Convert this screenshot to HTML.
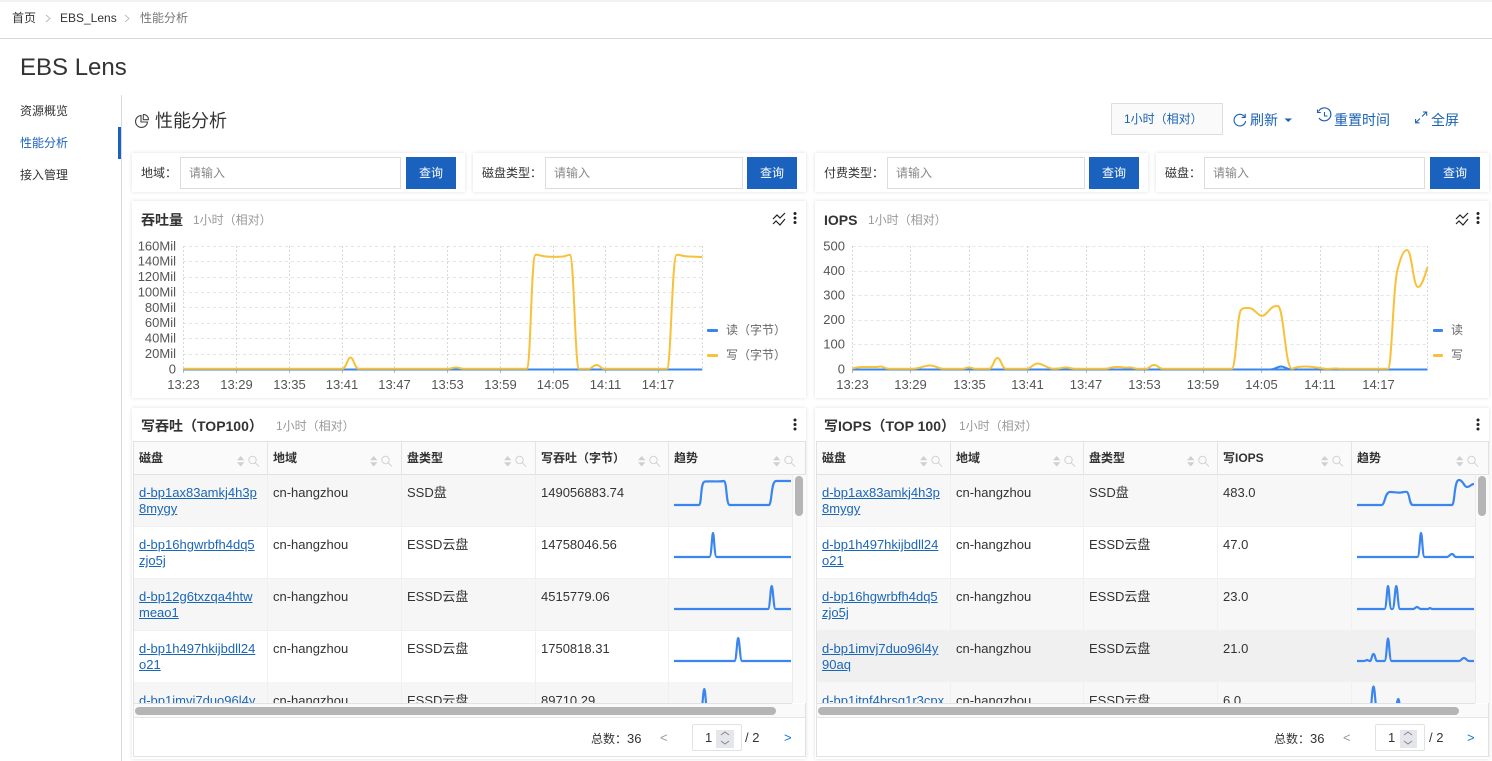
<!DOCTYPE html>
<html lang="zh"><head><meta charset="utf-8"><title>EBS Lens</title>
<style>
html,body{margin:0;padding:0;width:1492px;height:761px;overflow:hidden;background:#fff}
body{position:relative;font-family:"Liberation Sans","Noto Sans CJK SC",sans-serif;font-size:12px;color:#333}
.a,.c,.i,.b,.h,.t,.l,.r{position:absolute}
.c{background:#fff;box-shadow:0 0 4px rgba(0,0,0,.13)}
.f{white-space:nowrap;line-height:16px}
.lb{top:165px;color:#333}
.i{top:157px;height:30px;border:1px solid #dcdcdc;background:#fff;color:#888;line-height:30px;padding-left:8px;box-sizing:content-box}
.b{top:157px;width:50px;height:32px;background:#1a62bd;color:#fff;text-align:center;line-height:32px}
.h{top:450px;font-weight:700;line-height:16px;white-space:nowrap;color:#333}
.t{line-height:16px;font-size:13px;white-space:nowrap;color:#333}
.l{line-height:16px;font-size:13px;white-space:nowrap;color:#1a66b8;text-decoration:underline}
.r{height:52px;background:#fff;border-bottom:1px solid #f0f0f0;box-sizing:border-box}
.v{position:absolute;top:475px;width:1px;height:228px;background:#f0f0f0}
.vh{position:absolute;top:441px;width:1px;height:34px;background:#e4e4e4}
.ti{font-size:14px;font-weight:700;color:#333;white-space:nowrap;line-height:20px}
.su{color:#999;white-space:nowrap;line-height:16px}
svg{position:absolute;left:0;top:0}
svg text{font-family:"Liberation Sans","Noto Sans CJK SC",sans-serif;font-size:13px;fill:#555}
</style></head><body>

<div class="a" style="left:0;top:0;width:1492px;height:2px;background:#f2f2f2"></div>
<div class="a" style="left:0;top:38px;width:1492px;height:1px;background:#d9d9d9"></div>
<div class="a f" style="left:12px;top:10px">首页</div>
<div class="a f" style="left:60px;top:10px">EBS_Lens</div>
<div class="a f" style="left:140px;top:10px;color:#777">性能分析</div>
<div class="a" style="left:20px;top:53px;font-size:24px;line-height:30px;color:#333;white-space:nowrap">EBS Lens</div>

<div class="a" style="left:121px;top:95px;width:1px;height:666px;background:#d9d9d9"></div>
<div class="a" style="left:118px;top:127px;width:3px;height:32px;background:#1a62bd"></div>
<div class="a f" style="left:20px;top:103px">资源概览</div>
<div class="a f" style="left:20px;top:135px;color:#1a62bd">性能分析</div>
<div class="a f" style="left:20px;top:167px">接入管理</div>

<div class="a" style="left:155px;top:109px;font-size:18px;line-height:25px;white-space:nowrap;color:#333">性能分析</div>
<div class="a" style="left:1111px;top:103px;width:110px;height:30px;border:1px solid #ddd;background:#fafafa;border-radius:1px"></div>
<div class="a f" style="left:1124px;top:111px;color:#1a62b0">1小时（相对）</div>
<div class="a" style="left:1250px;top:110px;font-size:14px;line-height:20px;color:#1a62b0;white-space:nowrap">刷新</div>
<div class="a" style="left:1334px;top:110px;font-size:14px;line-height:20px;color:#1a62b0;white-space:nowrap">重置时间</div>
<div class="a" style="left:1431px;top:110px;font-size:14px;line-height:20px;color:#1a62b0;white-space:nowrap">全屏</div>

<!-- filters -->
<div class="c" style="left:132px;top:153px;width:333px;height:39px"></div>
<div class="c" style="left:473px;top:153px;width:333px;height:39px"></div>
<div class="c" style="left:815px;top:153px;width:333px;height:39px"></div>
<div class="c" style="left:1156px;top:153px;width:333px;height:39px"></div>
<div class="a f lb" style="left:141px">地域：</div>
<div class="i" style="left:180px;width:211px">请输入</div><div class="b" style="left:406px">查询</div>
<div class="a f lb" style="left:482px">磁盘类型：</div>
<div class="i" style="left:545px;width:188px">请输入</div><div class="b" style="left:747px">查询</div>
<div class="a f lb" style="left:824px">付费类型：</div>
<div class="i" style="left:887px;width:188px">请输入</div><div class="b" style="left:1089px">查询</div>
<div class="a f lb" style="left:1165px">磁盘：</div>
<div class="i" style="left:1204px;width:211px">请输入</div><div class="b" style="left:1430px">查询</div>

<!-- chart cards -->
<div class="c" style="left:132px;top:201px;width:674px;height:197px"></div>
<div class="c" style="left:815px;top:201px;width:674px;height:197px"></div>
<div class="a ti" style="left:141px;top:210px">吞吐量</div>
<div class="a su" style="left:193px;top:212px">1小时（相对）</div>
<div class="a ti" style="left:824px;top:210px">IOPS</div>
<div class="a su" style="left:868px;top:212px">1小时（相对）</div>
<div class="a f" style="left:726px;top:322px;color:#666">读（字节）</div>
<div class="a f" style="left:726px;top:347px;color:#666">写（字节）</div>
<div class="a f" style="left:1451px;top:322px;color:#666">读</div>
<div class="a f" style="left:1451px;top:347px;color:#666">写</div>

<!-- table cards -->
<div class="c" style="left:132px;top:408px;width:674px;height:351px"></div>
<div class="c" style="left:815px;top:408px;width:674px;height:351px"></div>
<div class="a ti" style="left:141px;top:416px">写吞吐（TOP100）</div>
<div class="a su" style="left:276px;top:418px">1小时（相对）</div>
<div class="a ti" style="left:824px;top:416px">写IOPS（TOP 100）</div>
<div class="a su" style="left:959px;top:418px">1小时（相对）</div>

<!-- left table -->
<div class="a" style="left:133px;top:441px;width:673px;height:316px;border:1px solid #e2e2e2;box-sizing:border-box"></div>
<div class="a" style="left:134px;top:442px;width:671px;height:32px;background:#fafafa;border-bottom:1px solid #e2e2e2"></div>
<div class="a" style="left:134px;top:475px;width:658px;height:228px;overflow:hidden;border-bottom:1px solid #e2e2e2">
 <div class="r" style="left:0;top:0;width:658px;background:#f6f6f6"></div>
 <div class="r" style="left:0;top:52px;width:658px;background:#fff"></div>
 <div class="r" style="left:0;top:104px;width:658px;background:#f6f6f6"></div>
 <div class="r" style="left:0;top:156px;width:658px;background:#fff"></div>
 <div class="r" style="left:0;top:207px;width:658px;background:#f6f6f6"></div>
 <a class="l" style="left:5px;top:10px">d-bp1ax83amkj4h3p<br>8mygy</a>
 <div class="t" style="left:139px;top:10px">cn-hangzhou</div><div class="t" style="left:273px;top:10px">SSD盘</div><div class="t" style="left:407px;top:10px">149056883.74</div>
 <a class="l" style="left:5px;top:62px">d-bp16hgwrbfh4dq5<br>zjo5j</a>
 <div class="t" style="left:139px;top:62px">cn-hangzhou</div><div class="t" style="left:273px;top:62px">ESSD云盘</div><div class="t" style="left:407px;top:62px">14758046.56</div>
 <a class="l" style="left:5px;top:114px">d-bp12g6txzqa4htw<br>meao1</a>
 <div class="t" style="left:139px;top:114px">cn-hangzhou</div><div class="t" style="left:273px;top:114px">ESSD云盘</div><div class="t" style="left:407px;top:114px">4515779.06</div>
 <a class="l" style="left:5px;top:166px">d-bp1h497hkijbdll24<br>o21</a>
 <div class="t" style="left:139px;top:166px">cn-hangzhou</div><div class="t" style="left:273px;top:166px">ESSD云盘</div><div class="t" style="left:407px;top:166px">1750818.31</div>
 <a class="l" style="left:5px;top:218px">d-bp1imvj7duo96l4y</a>
 <div class="t" style="left:139px;top:218px">cn-hangzhou</div><div class="t" style="left:273px;top:218px">ESSD云盘</div><div class="t" style="left:407px;top:218px">89710.29</div>
</div>
<div class="v" style="left:267px"></div><div class="v" style="left:401px"></div><div class="v" style="left:535px"></div><div class="v" style="left:668px"></div>
<div class="vh" style="left:267px"></div><div class="vh" style="left:401px"></div><div class="vh" style="left:535px"></div><div class="vh" style="left:668px"></div>
<div class="a" style="left:792px;top:475px;width:13px;height:228px;background:#fafafa;border-left:1px solid #ececec"></div>
<div class="a" style="left:134px;top:704px;width:671px;height:13px;background:#fafafa;border-bottom:1px solid #e6e6e6"></div>
<div class="h" style="left:139px">磁盘</div><div class="h" style="left:273px">地域</div><div class="h" style="left:407px">盘类型</div><div class="h" style="left:541px">写吞吐（字节）</div><div class="h" style="left:674px">趋势</div>

<!-- right table -->
<div class="a" style="left:816px;top:441px;width:673px;height:316px;border:1px solid #e2e2e2;box-sizing:border-box"></div>
<div class="a" style="left:817px;top:442px;width:671px;height:32px;background:#fafafa;border-bottom:1px solid #e2e2e2"></div>
<div class="a" style="left:817px;top:475px;width:658px;height:228px;overflow:hidden;border-bottom:1px solid #e2e2e2">
 <div class="r" style="left:0;top:0;width:658px;background:#f7f7f7"></div>
 <div class="r" style="left:0;top:52px;width:658px;background:#fff"></div>
 <div class="r" style="left:0;top:104px;width:658px;background:#f7f7f7"></div>
 <div class="r" style="left:0;top:156px;width:658px;background:#f0f0f0"></div>
 <div class="r" style="left:0;top:207px;width:658px;background:#f7f7f7"></div>
 <a class="l" style="left:5px;top:10px">d-bp1ax83amkj4h3p<br>8mygy</a>
 <div class="t" style="left:139px;top:10px">cn-hangzhou</div><div class="t" style="left:272px;top:10px">SSD盘</div><div class="t" style="left:406px;top:10px">483.0</div>
 <a class="l" style="left:5px;top:62px">d-bp1h497hkijbdll24<br>o21</a>
 <div class="t" style="left:139px;top:62px">cn-hangzhou</div><div class="t" style="left:272px;top:62px">ESSD云盘</div><div class="t" style="left:406px;top:62px">47.0</div>
 <a class="l" style="left:5px;top:114px">d-bp16hgwrbfh4dq5<br>zjo5j</a>
 <div class="t" style="left:139px;top:114px">cn-hangzhou</div><div class="t" style="left:272px;top:114px">ESSD云盘</div><div class="t" style="left:406px;top:114px">23.0</div>
 <a class="l" style="left:5px;top:166px">d-bp1imvj7duo96l4y<br>90aq</a>
 <div class="t" style="left:139px;top:166px">cn-hangzhou</div><div class="t" style="left:272px;top:166px">ESSD云盘</div><div class="t" style="left:406px;top:166px">21.0</div>
 <a class="l" style="left:5px;top:218px">d-bp1jtnf4brsq1r3cpx</a>
 <div class="t" style="left:139px;top:218px">cn-hangzhou</div><div class="t" style="left:272px;top:218px">ESSD云盘</div><div class="t" style="left:406px;top:218px">6.0</div>
</div>
<div class="v" style="left:950px"></div><div class="v" style="left:1083px"></div><div class="v" style="left:1217px"></div><div class="v" style="left:1351px"></div>
<div class="vh" style="left:950px"></div><div class="vh" style="left:1083px"></div><div class="vh" style="left:1217px"></div><div class="vh" style="left:1351px"></div>
<div class="a" style="left:1475px;top:475px;width:13px;height:228px;background:#fafafa;border-left:1px solid #ececec"></div>
<div class="a" style="left:817px;top:704px;width:671px;height:13px;background:#fafafa;border-bottom:1px solid #e6e6e6"></div>
<div class="h" style="left:822px">磁盘</div><div class="h" style="left:956px">地域</div><div class="h" style="left:1089px">盘类型</div><div class="h" style="left:1223px">写IOPS</div><div class="h" style="left:1357px">趋势</div>

<!-- pagination -->
<div class="a f" style="left:591px;top:731px">总数：</div><div class="a" style="left:627px;top:731px;font-size:13px;line-height:16px">36</div>
<div class="a" style="left:692px;top:724px;width:48px;height:25px;border:1px solid #e2e2e2;border-radius:2px"></div>
<div class="a" style="left:716px;top:730px;width:18px;height:18px;background:#e4e6ec"></div>
<div class="a" style="left:705px;top:730px;font-size:13px;line-height:16px">1</div>
<div class="a" style="left:745px;top:730px;font-size:13px;line-height:16px">/ 2</div>
<div class="a" style="left:660px;top:730px;font-size:13px;line-height:16px;color:#999">&lt;</div>
<div class="a" style="left:784px;top:730px;font-size:13px;line-height:16px;color:#1a73d9">&gt;</div>

<div class="a f" style="left:1274px;top:731px">总数：</div><div class="a" style="left:1310px;top:731px;font-size:13px;line-height:16px">36</div>
<div class="a" style="left:1375px;top:724px;width:48px;height:25px;border:1px solid #e2e2e2;border-radius:2px"></div>
<div class="a" style="left:1400px;top:730px;width:17px;height:18px;background:#e4e6ec"></div>
<div class="a" style="left:1388px;top:730px;font-size:13px;line-height:16px">1</div>
<div class="a" style="left:1429px;top:730px;font-size:13px;line-height:16px">/ 2</div>
<div class="a" style="left:1343px;top:730px;font-size:13px;line-height:16px;color:#999">&lt;</div>
<div class="a" style="left:1467px;top:730px;font-size:13px;line-height:16px;color:#1a73d9">&gt;</div>

<svg width="1492" height="761" viewBox="0 0 1492 761" fill="none">
<defs>
 <clipPath id="cl"><rect x="134" y="475" width="658" height="228"/></clipPath>
 <clipPath id="cr"><rect x="817" y="475" width="658" height="228"/></clipPath>
 <g id="srt"><path d="M0 4.300L3.700 0L7.400 4.300ZM0 6.200L3.700 10.500L7.400 6.200Z" fill="#cfcfcf"/><circle cx="15.500" cy="4" r="3.700" stroke="#d2d2d2"/><path d="M18.200 6.700L22 10.500" stroke="#d2d2d2"/></g>
 <g id="trd" stroke="#222" stroke-width="1.200"><path d="M773 219L777 215L780 218L785 213"/><path d="M773 224L776 221L780 225L785 219"/></g>
 <g id="keb" fill="#222"><circle cx="0" cy="0" r="1.500"/><circle cx="0" cy="4.500" r="1.500"/><circle cx="0" cy="9" r="1.500"/></g>
 <g id="spin" stroke="#888" stroke-width="1"><path d="M-4 3L0 0L4 3"/><path d="M-4 9L0 12L4 9"/></g>
</defs>

<!-- breadcrumb chevrons -->
<path d="M46 15L50 18.500L46 22M125 15L129 18.500L125 22" stroke="#bbb"/>
<!-- page heading pie -->
<path d="M141 115.500A6 6 0 1 0 147.500 122H141Z" stroke="#444" stroke-width="1.100"/>
<path d="M143.300 114.500A5 5 0 0 1 148.500 119.700H143.300Z" stroke="#444" stroke-width="1.100"/>
<!-- toolbar icons -->
<g transform="translate(0 1)"><path d="M1244.600 115.800A5.800 5.800 0 1 0 1245.600 120" stroke="#1a62b0" stroke-width="1.100"/><path d="M1245.200 112.800V116.400H1241.600" stroke="#1a62b0" stroke-width="1.100"/></g>
<path d="M1284.500 118.500H1292L1288.200 122Z" fill="#1a62b0"/>
<path d="M1318.500 112.500A6.500 6.500 0 1 1 1319 119" stroke="#1a62b0" stroke-width="1.200" transform="translate(0 -1)"/><path d="M1317.500 109.500V112.500H1320.800M1324.500 112V116H1327.500" stroke="#1a62b0" stroke-width="1.100"/>
<path d="M1422 116.500L1426 112.500M1423 112H1426.700V115.700M1420 118.500L1416 122.500M1415.600 119V122.800H1419.400" stroke="#1a62b0" stroke-width="1.100"/>

<!-- chart icons -->
<use href="#trd"/><use href="#trd" x="683"/>
<use href="#keb" x="795" y="213.500"/><use href="#keb" x="1478" y="213.500"/>
<use href="#keb" x="795" y="420"/><use href="#keb" x="1478" y="420"/>

<!-- chart grids -->
<g stroke="#e4e4e4" stroke-dasharray="3 3">
 <path d="M183 246.500H702M183 261.500H702M183 277.500H702M183 292.500H702M183 307.500H702M183 323.500H702M183 338.500H702M183 354.500H702"/>
 <path d="M852.500 246.500H1427M852.500 271.500H1427M852.500 295.500H1427M852.500 320.500H1427M852.500 344.500H1427"/>
</g>
<g stroke="#d8d8d8" stroke-dasharray="2 2">
 <path d="M183.500 246V369M236.500 246V369M289.500 246V369M342.500 246V369M394.500 246V369M447.500 246V369M500.500 246V369M553.500 246V369M605.500 246V369M658.500 246V369M702.500 246V369"/>
 <path d="M852.500 246V369M910.500 246V369M969.500 246V369M1027.500 246V369M1086.500 246V369M1144.500 246V369M1203.500 246V369M1261.500 246V369M1320.500 246V369M1378.500 246V369M1427.500 246V369"/>
</g>
<path d="M183.500 369.500V373M236.500 369.500V373M289.500 369.500V373M342.500 369.500V373M394.500 369.500V373M447.500 369.500V373M500.500 369.500V373M553.500 369.500V373M605.500 369.500V373M658.500 369.500V373M852.500 369.500V373M910.500 369.500V373M969.500 369.500V373M1027.500 369.500V373M1086.500 369.500V373M1144.500 369.500V373M1203.500 369.500V373M1261.500 369.500V373M1320.500 369.500V373M1378.500 369.500V373" stroke="#bbb"/>

<!-- chart labels -->
<g text-anchor="end">
<text x="176" y="250.300">160Mil</text><text x="176" y="265.700">140Mil</text><text x="176" y="281">120Mil</text><text x="176" y="296.400">100Mil</text><text x="176" y="311.800">80Mil</text><text x="176" y="327.200">60Mil</text><text x="176" y="342.600">40Mil</text><text x="176" y="358">20Mil</text><text x="176" y="373.400">0</text>
<text x="845" y="250.300">500</text><text x="845" y="275">400</text><text x="845" y="299.500">300</text><text x="845" y="324">200</text><text x="845" y="348.500">100</text><text x="845" y="373.400">0</text>
</g>
<g text-anchor="middle">
<text x="183.500" y="389">13:23</text><text x="236.500" y="389">13:29</text><text x="289.500" y="389">13:35</text><text x="342" y="389">13:41</text><text x="394.500" y="389">13:47</text><text x="447.500" y="389">13:53</text><text x="500.500" y="389">13:59</text><text x="553" y="389">14:05</text><text x="605.500" y="389">14:11</text><text x="658" y="389">14:17</text>
<text x="852.500" y="389">13:23</text><text x="910.500" y="389">13:29</text><text x="969.500" y="389">13:35</text><text x="1027.500" y="389">13:41</text><text x="1086" y="389">13:47</text><text x="1144.500" y="389">13:53</text><text x="1203" y="389">13:59</text><text x="1261.500" y="389">14:05</text><text x="1320" y="389">14:11</text><text x="1378.500" y="389">14:17</text>
</g>

<!-- chart lines -->
<path d="M183.300 369.500H702.300" stroke="#3a86ee" stroke-width="2"/>
<path d="M183.300 368.800H342.500C346 368.800 347.500 357.500 350.500 357.500C353.500 357.500 355 368.800 358.500 368.800H448C451 368.800 453 367.500 456 367.500C459 367.500 461 368.800 464 368.800H526.700C531 368 531 256 535.500 254.800C538 254.400 541 256 546 256.500C552 257 558 257 563 256.500C566 256 568 254.800 570 254.800C574 256 575 368 579 368.800H589C592 368.800 593 365 596.500 365C600 365 601 368.800 604 368.800H667C671 368 672 256 676.500 254.800C679 254.400 683 256.500 689 256.500C694 256.500 698 257 702.300 257" stroke="#f7c13b" stroke-width="2"/>
<path d="M852.300 369.500H1427.500" stroke="#3a86ee" stroke-width="2"/>
<path d="M1270 369.500C1275 369.500 1277 366.500 1281 366.500C1285 366.500 1287 369.500 1292 369.500" stroke="#3a86ee" stroke-width="2"/>
<path d="M852.300 368.500C856 367.500 858 367 862 367H876C878 367 879 366.500 881 366.500C883 366.500 885 368.800 889 368.800H912C920 368.800 924 365.500 930 365.500C936 365.500 938 368.800 944 368.800H962C965 368.800 966 367.500 969 367.500C972 367.500 973 368.800 976 368.800H989C993 368.800 994 358 997.500 358C1001 358 1002 368.800 1006 368.800H1027C1031 368.800 1033 363.500 1037.500 363.500C1043 363.500 1047 368.800 1054 368.800C1060 368.800 1062 367.500 1066 367.500C1070 367.500 1071 368.800 1075 368.800H1105C1109 368.800 1111 367 1115 367H1120C1123 367 1124 368 1128 367.500C1132 367 1134 368.800 1138 368.800H1146C1150 368.800 1150 365 1154 365C1158 365 1159 368.800 1163 368.800H1232C1236 368 1237 314 1241 310C1243 307.500 1246 308 1249 308C1254 308 1258 316 1262 316C1266 316 1270 307.500 1274 306.500C1276 306 1277 306 1278 306C1284 308 1285 368 1292 368.800C1296 367 1300 366.500 1306 366.500C1312 366.500 1318 368 1326 368.800C1332 369 1336 368 1340 368.800H1388C1392 368 1393 282 1398 268C1400 260 1403 250 1407 250C1412 250 1413 287 1418 287C1422 287 1425 275 1427.500 267" stroke="#f7c13b" stroke-width="2"/>

<!-- legend ticks -->
<rect x="707" y="329" width="11" height="3" fill="#3a86ee" rx="1"/><rect x="707" y="354" width="11" height="3" fill="#f7c13b" rx="1"/>
<rect x="1433" y="329" width="10" height="3" fill="#3a86ee" rx="1"/><rect x="1433" y="354" width="10" height="3" fill="#f7c13b" rx="1"/>

<!-- sort icons -->
<use href="#srt" x="237" y="456"/><use href="#srt" x="370" y="456"/><use href="#srt" x="504" y="456"/><use href="#srt" x="638" y="456"/><use href="#srt" x="773" y="456"/>
<use href="#srt" x="920" y="456"/><use href="#srt" x="1053" y="456"/><use href="#srt" x="1187" y="456"/><use href="#srt" x="1321" y="456"/><use href="#srt" x="1456" y="456"/>

<!-- sparklines -->
<g clip-path="url(#cl)" stroke="#3a86ee" stroke-width="2.200">
<path d="M674 505H699C702 504 700 482 705 481.500C710 481 720 482 724 481C727 482 726 504 729.500 505H769C772 504 771 481 776 481H791"/>
<path d="M674 557H709.500C711.500 557 712 533 713 533C714 533 714.500 557 716.500 557H791"/>
<path d="M674 609H768C770 609 770.500 586 771.700 586C773 586 773.500 609 775.500 609H791"/>
<path d="M674 661H734.500C736.500 661 737 638 738.200 638C739.500 638 740 661 742 661H791"/>
<path d="M674 713H700.500C702.500 713 703 689 704.300 689C705.500 689 706 713 708 713H791"/>
</g>
<g clip-path="url(#cr)" stroke="#3a86ee" stroke-width="2.200">
<path d="M1357 505H1382C1385 504 1385 492 1390 492C1394 492 1398 493 1401 492.500C1404 492 1406 491.500 1407 492C1410 494 1409 505 1413 505H1452C1455 504 1454 480 1459 480C1463 480 1464 487 1467 487C1470 487 1471 484 1474 484"/>
<path d="M1357 557H1417.500C1419.500 557 1420 533 1421 533C1422.200 533 1422.500 557 1424.500 557H1447C1449 557 1450 554 1452 554C1454 554 1454 557 1456 557H1474"/>
<path d="M1357 609H1384.500C1386.500 609 1387 586 1388 586C1389.200 586 1389.500 609 1391.500 609H1392.500C1394.500 609 1395 586 1396.300 586C1397.500 586 1398 609 1400 609H1413C1415 609 1415.500 607 1417 607C1418.500 607 1419 609 1421 609H1428C1429 609 1429.500 608 1430 608C1431 608 1431 609 1432 609H1474"/>
<path d="M1357 661H1364C1365.500 661 1366 660 1367 660C1368 660 1369 661 1370 661C1371.500 661 1372 654 1373.500 654C1375 654 1375.500 661 1377 661H1384.500C1386.500 661 1387 638.500 1388 638.500C1389.200 638.500 1389.500 661 1391.500 661H1459C1461 661 1462 658 1464 658C1466 658 1467 661 1469 661H1474"/>
<path d="M1357 713H1369.500C1371.500 713 1372 686.500 1373.500 686.500C1375 686.500 1375.500 713 1377.500 713H1394.500C1396 713 1397 699 1398.300 699C1399.500 699 1400 713 1402 713H1474"/>
</g>

<!-- scrollbars -->
<rect x="795" y="476" width="8" height="40" rx="4" fill="#b5b5b5"/>
<rect x="1478" y="476" width="8" height="40" rx="4" fill="#b5b5b5"/>
<rect x="135" y="707" width="641" height="8" rx="4" fill="#b5b5b5"/>
<rect x="818" y="707" width="641" height="8" rx="4" fill="#b5b5b5"/>

<!-- spinners -->
<use href="#spin" x="725" y="732"/><use href="#spin" x="1408" y="732"/>
</svg>
</body></html>
